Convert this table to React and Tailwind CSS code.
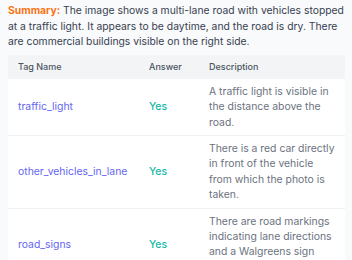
import React from 'react';

const rows = [
  {
    tag: 'traffic_light',
    answer: 'Yes',
    desc: 'A traffic light is visible in the distance above the road.',
  },
  {
    tag: 'other_vehicles_in_lane',
    answer: 'Yes',
    desc: 'There is a red car directly in front of the vehicle from which the photo is taken.',
  },
  {
    tag: 'road_signs',
    answer: 'Yes',
    desc: 'There are road markings indicating lane directions and a Walgreens sign visible.',
  },
];

const App = () => {
  return (
    <div
      className="w-[352px] h-[260px] overflow-hidden bg-[#f9fafb]"
      style={{ fontFamily: 'Inter, "Noto Sans", sans-serif' }}
    >
      <p className="pl-2 pt-[3px] text-[10.35px] leading-[15.6px] text-[#374151]">
        <span className="font-bold text-[#f97316]">Summary:</span> The image shows a multi-lane road with vehicles stopped
        at a traffic light. It appears to be daytime, and the road is dry. There are commercial buildings visible on the right side.
      </p>
      <div className="ml-2 w-[337px] mt-[5px] bg-white">
        <table className="w-full border-collapse table-fixed">
          <colgroup>
            <col className="w-[141px]" />
            <col className="w-[60px]" />
            <col />
          </colgroup>
          <thead>
            <tr className="bg-[#f3f4f6]">
              <th className="h-[24px] pl-[10px] text-left text-[9px] font-medium text-[#4b5563]">Tag Name</th>
              <th className="h-[24px] text-left text-[9px] font-medium text-[#4b5563]">Answer</th>
              <th className="h-[24px] text-left text-[9px] font-medium text-[#4b5563]">Description</th>
            </tr>
          </thead>
          <tbody>
            {rows.map((r) => (
              <tr key={r.tag} className="border-b border-[#eff0f2]">
                <td className="pl-[10px] text-[10.4px] text-[#6366f1]">{r.tag}</td>
                <td className="text-[10.4px] font-medium text-[#14b8a6]">{r.answer}</td>
                <td className="py-[5px] pr-[10px] text-[10.4px] leading-[15.4px] text-[#6b7280]">{r.desc}</td>
              </tr>
            ))}
          </tbody>
        </table>
      </div>
    </div>
  );
};

export default App;
